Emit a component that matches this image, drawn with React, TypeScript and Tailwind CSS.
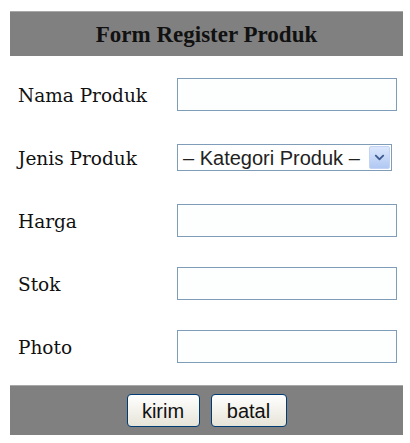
import { FaChevronDown } from 'react-icons/fa';

const fields = [
  { label: 'Nama Produk', type: 'text' },
  { label: 'Jenis Produk', type: 'select' },
  { label: 'Harga', type: 'text' },
  { label: 'Stok', type: 'text' },
  { label: 'Photo', type: 'text' },
];

export default function App() {
  return (
    <div className="w-[410px] h-[443px] bg-white pt-[11px] pl-[10px] font-['DejaVu_Serif',serif] text-black">
      <div className="w-[393px]">
        <div className="h-[45px] bg-[#808080] border-t border-[#a8a8a8] flex items-center justify-center">
          <h1 className="font-['Liberation_Serif',serif] text-[23px] font-bold leading-none text-[#111]">Form Register Produk</h1>
        </div>

        <div className="flex flex-col pt-[7px]">
          {fields.map((f) => (
            <div key={f.label} className="flex items-center h-[63px]">
              <label className="w-[167px] pl-[8px] pt-[4px] text-[18.5px] leading-none text-[#111]">{f.label}</label>
              {f.type === 'select' ? (
                <div className="w-[215px] h-[27px] border border-[#7f9db9] bg-white flex items-center pl-[5px] pr-[1px] font-['Liberation_Sans',sans-serif] text-[20px] text-[#222]">
                  <span className="flex-1 whitespace-nowrap leading-none">– Kategori Produk –</span>
                  <span className="w-[21px] h-[23px] rounded-[2px] bg-gradient-to-b from-[#dce7fc] to-[#b0c8f3] border border-[#c3d3f5] flex items-center justify-center text-[#3d5a8f]">
                    <FaChevronDown size={11} />
                  </span>
                </div>
              ) : (
                <input
                  type="text"
                  className="w-[220px] h-[33px] border border-[#7f9db9] bg-[#fdfefe] outline-none"
                />
              )}
            </div>
          ))}
        </div>

        <div className="mt-[7px] h-[50px] bg-[#808080] border-t border-[#a8a8a8] flex items-center justify-center gap-[11px] font-['Liberation_Sans',sans-serif]">
          <button className="w-[73px] h-[33px] rounded-[4px] border border-[#003c74] bg-gradient-to-b from-white to-[#e6e4d8] text-[20px] text-[#111] leading-none">
            kirim
          </button>
          <button className="w-[76px] h-[33px] rounded-[4px] border border-[#003c74] bg-gradient-to-b from-white to-[#e6e4d8] text-[20px] text-[#111] leading-none">
            batal
          </button>
        </div>
      </div>
    </div>
  );
}
